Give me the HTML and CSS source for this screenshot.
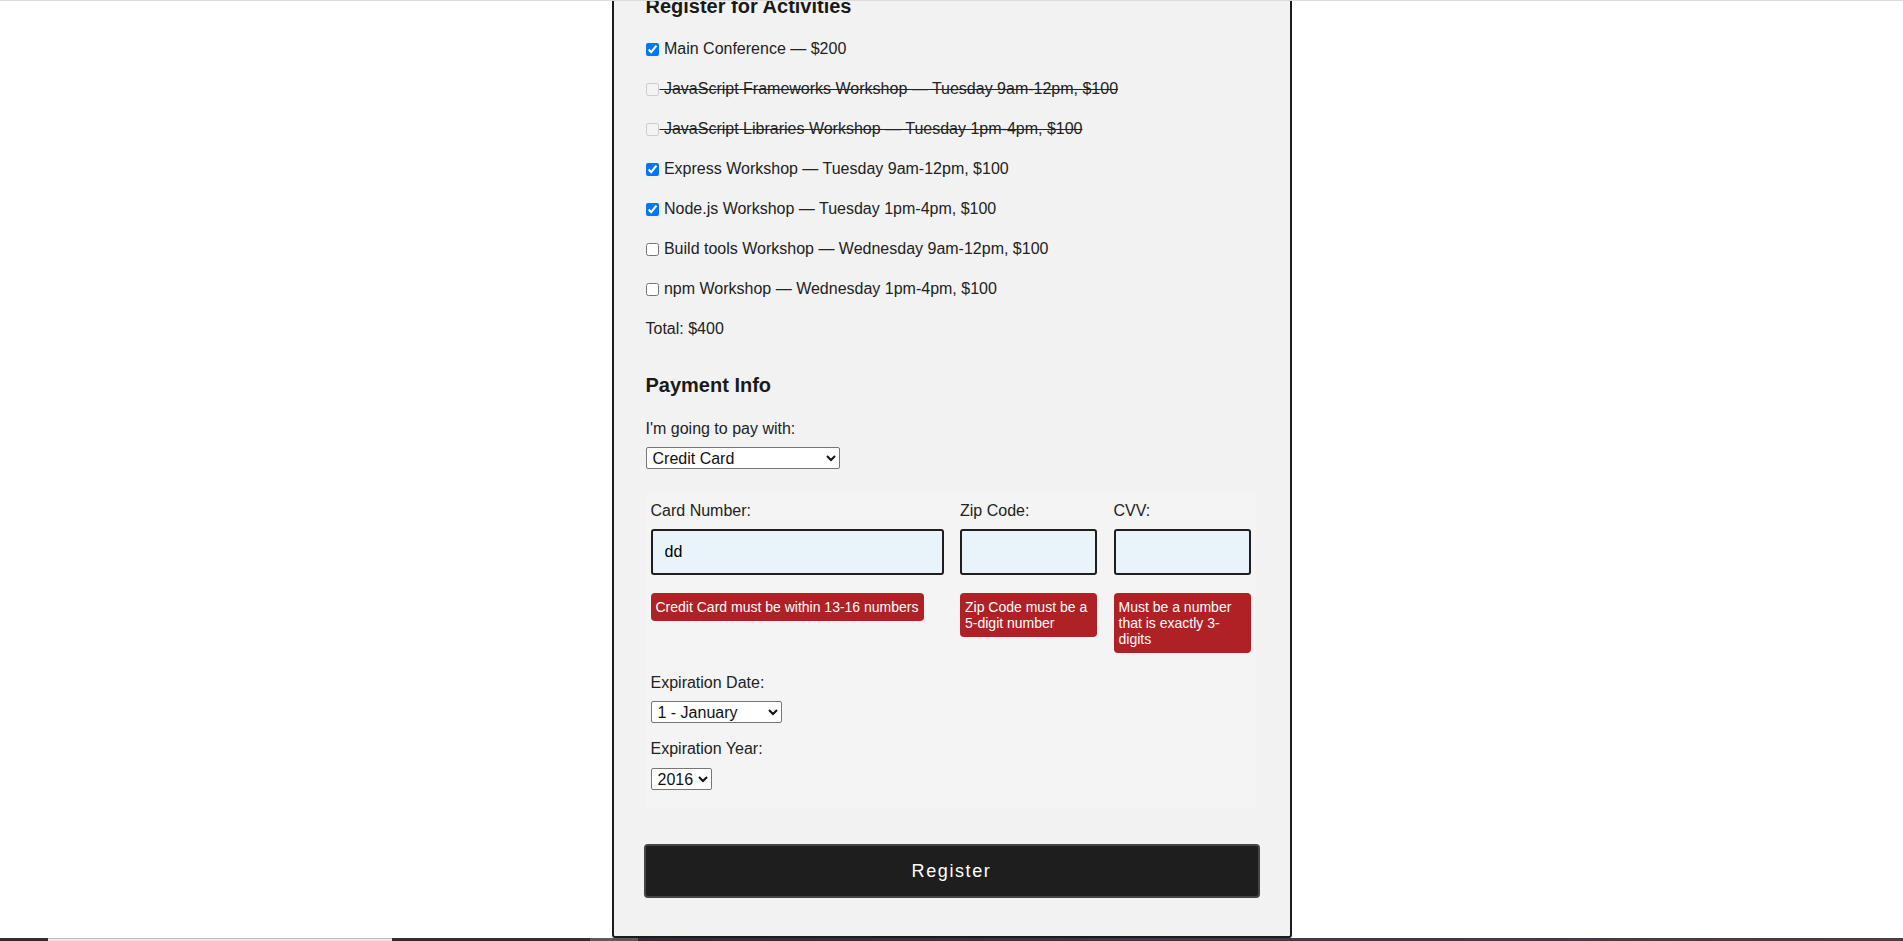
FILE: index.html
```html
<!DOCTYPE html>
<html lang="en">
<head>
<meta charset="utf-8">
<title>Register</title>
<link rel="stylesheet" href="styles.css">
</head>
<body>
<div class="topline"></div>
<main class="page">
  <form class="card">
    <fieldset class="section">
      <h3 class="section-title">Register for Activities</h3>
      <div class="activity-list">
        <label class="activity"><input type="checkbox" checked> Main Conference — $200</label>
        <label class="activity disabled"><input type="checkbox" disabled> JavaScript Frameworks Workshop — Tuesday 9am-12pm, $100</label>
        <label class="activity disabled"><input type="checkbox" disabled> JavaScript Libraries Workshop — Tuesday 1pm-4pm, $100</label>
        <label class="activity"><input type="checkbox" checked> Express Workshop — Tuesday 9am-12pm, $100</label>
        <label class="activity"><input type="checkbox" checked> Node.js Workshop — Tuesday 1pm-4pm, $100</label>
        <label class="activity"><input type="checkbox"> Build tools Workshop — Wednesday 9am-12pm, $100</label>
        <label class="activity"><input type="checkbox"> npm Workshop — Wednesday 1pm-4pm, $100</label>
        <p class="total">Total: $400</p>
      </div>
    </fieldset>

    <fieldset class="section">
      <h3 class="section-title payment-title">Payment Info</h3>
      <label class="field-label pay-label" for="payment">I'm going to pay with:</label>
      <select id="payment" class="select select-payment">
        <option>Credit Card</option>
        <option>PayPal</option>
        <option>Bitcoin</option>
      </select>

      <div class="cc-panel">
        <div class="cc-row">
          <div class="cc-col">
            <label class="field-label" for="cc-num">Card Number:</label>
            <input id="cc-num" class="text-input" type="text" value="dd">
            <span class="error">Credit Card must be within 13-16 numbers</span>
          </div>
          <div class="cc-col">
            <label class="field-label" for="zip">Zip Code:</label>
            <input id="zip" class="text-input" type="text">
            <span class="error error-fill">Zip Code must be a 5-digit number</span>
          </div>
          <div class="cc-col">
            <label class="field-label" for="cvv">CVV:</label>
            <input id="cvv" class="text-input" type="text">
            <span class="error error-fill">Must be a number that is exactly 3-digits</span>
          </div>
        </div>

        <label class="field-label exp-label" for="exp-month">Expiration Date:</label>
        <select id="exp-month" class="select select-month">
          <option>1 - January</option>
          <option>2 - February</option>
        </select>

        <label class="field-label year-label" for="exp-year">Expiration Year:</label>
        <select id="exp-year" class="select select-year">
          <option>2016</option>
          <option>2017</option>
        </select>
      </div>
    </fieldset>

    <button type="button" class="submit">Register</button>
  </form>
</main>
<div class="taskbar">
  <span class="seg seg-a"></span>
  <span class="seg seg-b"></span>
  <span class="seg seg-c"></span>
  <span class="seg seg-d"></span>
  <span class="seg seg-e"></span>
</div>
</body>
</html>
```

FILE: styles.css
```css
* {
  box-sizing: border-box;
}

html, body {
  margin: 0;
  padding: 0;
  background: #ffffff;
}

body {
  font-family: "Liberation Sans", Arial, sans-serif;
  font-size: 16px;
  color: #222222;
  overflow: hidden;
}

.topline {
  position: fixed;
  top: 0;
  left: 0;
  right: 0;
  height: 1px;
  background: #dcdcdc;
  z-index: 5;
}

.page {
  margin-top: -7px;
}

.card {
  width: 680px;
  margin: 0 auto;
  background: #f2f2f2;
  border: 2px solid #1c1c1c;
  border-radius: 3px;
  padding: 0 30px 38px;
}

.section {
  border: 0;
  margin: 0;
  padding: 0 2px;
  min-width: 0;
}

.section-title {
  margin: 0;
  font-size: 20px;
  line-height: 23px;
  font-weight: bold;
  color: #1a1a1a;
}

.activity-list {
  display: flex;
  flex-direction: column;
  gap: 22px;
  margin-top: 22px;
}

.activity {
  display: flex;
  align-items: center;
  height: 18px;
  line-height: 18px;
  white-space: pre;
}

.activity input {
  margin: 0 1px 0 0;
  width: 13px;
  height: 13px;
}

.activity.disabled {
  text-decoration: line-through;
}

.total {
  margin: 0;
  line-height: 18px;
}

.payment-title {
  margin-top: 36px;
}

.field-label {
  display: block;
  line-height: 18px;
}

.pay-label {
  margin-top: 23px;
}

.select {
  display: block;
  height: 22px;
  font-family: "Liberation Sans", Arial, sans-serif;
  font-size: 16px;
  color: #111;
  background: #fff;
  border: 1px solid #767676;
  border-radius: 2px;
  padding: 0 0 0 2px;
}

.select-payment {
  width: 194px;
  margin-top: 9px;
}

.cc-panel {
  margin-top: 23px;
  margin-right: 2px;
  background: #f4f4f4;
  padding: 10px 5px 18px;
}

.cc-row {
  display: grid;
  grid-template-columns: 293px 137px 137px;
  column-gap: 16.5px;
  align-items: start;
}

.cc-col {
  display: flex;
  flex-direction: column;
  align-items: flex-start;
}

.text-input {
  width: 100%;
  height: 46px;
  margin-top: 9px;
  background: #e8f4fa;
  border: 2px solid #1e1e1e;
  border-radius: 3px;
  padding: 0 12px;
  font-family: "Liberation Sans", Arial, sans-serif;
  font-size: 16px;
  color: #000;
}

.error {
  margin-top: 18px;
  background: #b02125;
  color: #ffffff;
  font-size: 14px;
  line-height: 16px;
  padding: 6px 5px;
  border-radius: 4px;
}

.error-fill {
  width: 100%;
}

.exp-label {
  margin-top: 21px;
}

.select-month {
  width: 131px;
  margin-top: 9px;
}

.year-label {
  margin-top: 17px;
}

.select-year {
  width: 61px;
  margin-top: 10px;
}

.submit {
  display: block;
  width: 100%;
  height: 54px;
  margin-top: 36px;
  background: #1e1e1e;
  color: #ffffff;
  border: 2px solid #444444;
  border-radius: 4px;
  font-family: "Liberation Sans", Arial, sans-serif;
  font-size: 18px;
  letter-spacing: 1.6px;
}

.taskbar {
  position: fixed;
  left: 0;
  right: 0;
  bottom: 0;
  height: 3px;
  display: flex;
  z-index: 5;
}

.seg {
  height: 100%;
}

.seg-a {
  width: 48px;
  background: #2f2f2f;
}

.seg-b {
  width: 344px;
  background: #e8e8e8;
  border-top: 1px solid #c4c4c4;
}

.seg-c {
  width: 198px;
  background: #2f2f2f;
}

.seg-d {
  width: 48px;
  background: #5a5a5a;
}

.seg-e {
  flex: 1;
  background: linear-gradient(90deg, #2e2e35 0%, #3a3a48 40%, #423d46 75%, #4a3e3e 100%);
}
```
